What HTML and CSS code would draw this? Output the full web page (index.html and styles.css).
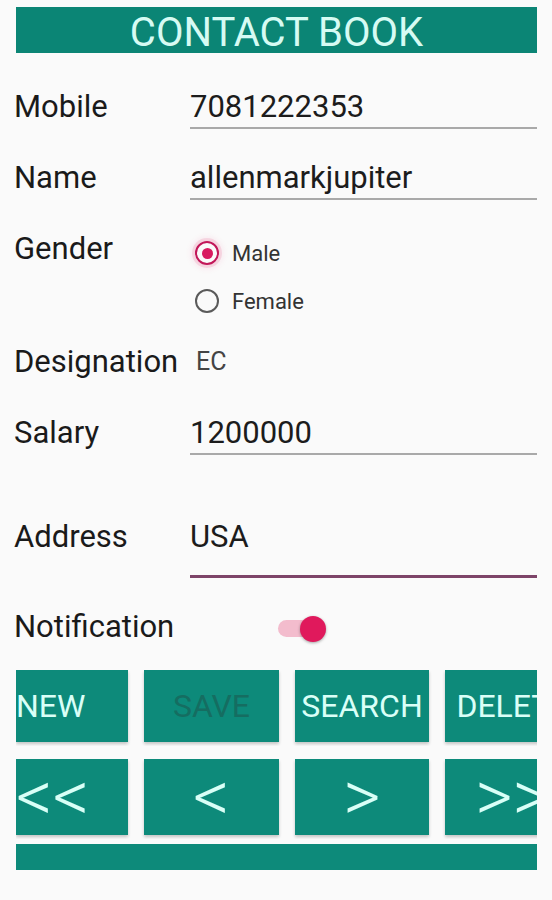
FILE: index.html
```html
<!DOCTYPE html>
<html lang="en">
<head>
    <meta charset="UTF-8">
    <meta name="viewport" content="width=device-width, initial-scale=1.0">
    <title>Contact Book</title>
    <link rel="stylesheet" href="styles.css">
</head>
<body>
    <div class="screen">
        <h1 class="title">CONTACT BOOK</h1>

        <div class="row row-mobile">
            <span class="label">Mobile</span>
            <div class="edit">7081222353</div>
        </div>

        <div class="row row-name">
            <span class="label">Name</span>
            <div class="edit">allenmarkjupiter</div>
        </div>

        <div class="row row-gender">
            <span class="label gender-label">Gender</span>
            <div class="radio-group">
                <div class="radio-item">
                    <span class="radio checked"></span>
                    <span class="radio-text">Male</span>
                </div>
                <div class="radio-item">
                    <span class="radio"></span>
                    <span class="radio-text">Female</span>
                </div>
            </div>
        </div>

        <div class="row row-designation">
            <span class="label">Designation</span>
            <span class="spinner-value">EC</span>
        </div>

        <div class="row row-salary">
            <span class="label">Salary</span>
            <div class="edit">1200000</div>
        </div>

        <div class="row row-address">
            <span class="label">Address</span>
            <div class="edit edit-focused">USA</div>
        </div>

        <div class="row row-notify">
            <span class="label">Notification</span>
            <div class="switch">
                <span class="switch-track"></span>
                <span class="switch-thumb"></span>
            </div>
        </div>

        <div class="btn-row btn-row-top">
            <div class="btn btn-start">NEW</div>
            <div class="btn btn-wide btn-disabled">SAVE</div>
            <div class="btn btn-mid">SEARCH</div>
            <div class="btn btn-wide">DELETE</div>
        </div>

        <div class="btn-row btn-row-nav">
            <div class="btn btn-start arrow">&lt;&lt;</div>
            <div class="btn btn-wide arrow">&lt;</div>
            <div class="btn btn-mid arrow">&gt;</div>
            <div class="btn btn-wide arrow">&gt;&gt;</div>
        </div>

        <div class="bottom-bar"></div>
    </div>
</body>
</html>
```

FILE: styles.css
```css
body {
    margin: 0;
    background: #fafafa;
    font-family: Roboto, 'Liberation Sans', sans-serif;
    color: #1a1a1a;
}
.screen {
    width: 521px;
    padding: 7px 15px 0 16px;
}
.title {
    margin: 0;
    height: 46px;
    box-sizing: border-box;
    padding-top: 6px;
    background: #0b8575;
    color: #d6fbf3;
    font-size: 40px;
    font-weight: 400;
    line-height: 40px;
    text-align: center;
}
.row {
    display: flex;
    align-items: flex-start;
}
.label {
    flex: none;
    width: 176px;
    margin-left: -2px;
    font-size: 31px;
    line-height: 36px;
}
.edit {
    flex: 1;
    font-size: 31px;
    line-height: 36px;
    padding-bottom: 2px;
    border-bottom: 2px solid #a9a9a9;
    color: #1c1c1c;
}
.edit-focused {
    padding-bottom: 20px;
    border-bottom: 3px solid #7d4468;
}
.row-mobile {
    margin-top: 36px;
}
.row-name {
    margin-top: 31px;
}
.row-gender {
    margin-top: 29px;
}
.gender-label {
    margin-top: 2px;
}
.radio-group {
    display: flex;
    flex-direction: column;
}
.radio-item {
    display: flex;
    align-items: center;
    height: 48px;
}
.radio {
    width: 24px;
    height: 24px;
    box-sizing: border-box;
    margin: 0 13px 0 5px;
    border: 2px solid #5a5a5a;
    border-radius: 50%;
    display: flex;
    align-items: center;
    justify-content: center;
}
.radio.checked {
    border: 2.5px solid #c21759;
    box-shadow: 0 0 0 3px rgba(233, 30, 99, 0.12), 0 0 6px 4px rgba(233, 30, 99, 0.08);
}
.radio.checked::after {
    content: "";
    width: 11px;
    height: 11px;
    border-radius: 50%;
    background: #d81b60;
}
.radio-text {
    font-size: 22px;
    color: #333333;
}
.row-designation {
    margin-top: 19px;
}
.spinner-value {
    padding-left: 6px;
    font-size: 25px;
    line-height: 36px;
    color: #444444;
}
.row-salary {
    margin-top: 35px;
}
.row-address {
    margin-top: 64px;
}
.row-notify {
    margin-top: 31px;
}
.switch {
    position: relative;
    margin: 11px 0 0 88px;
    width: 48px;
    height: 17px;
}
.switch-track {
    display: block;
    width: 44px;
    height: 17px;
    border-radius: 9px;
    background: #f3bccd;
}
.switch-thumb {
    position: absolute;
    left: 22px;
    top: -4.5px;
    width: 26px;
    height: 26px;
    border-radius: 50%;
    background: #e0195c;
    box-shadow: 0 1px 3px rgba(0, 0, 0, 0.35);
}
.btn-row {
    display: flex;
    gap: 16px;
    overflow: hidden;
    padding-bottom: 4px;
}
.btn-row-top {
    margin-top: 25px;
}
.btn-row-nav {
    margin-top: 13px;
}
.btn {
    flex: none;
    height: 72px;
    display: flex;
    align-items: center;
    justify-content: center;
    background: #0d8a7a;
    color: #d9fff7;
    font-size: 32px;
    white-space: nowrap;
    box-shadow: 0 2px 3px rgba(0, 0, 0, 0.22);
}
.btn-start {
    width: 112px;
    justify-content: flex-start;
}
.btn-wide {
    width: 135px;
}
.btn-mid {
    width: 134px;
}
.btn-disabled {
    color: #156d61;
}
.btn-row-nav .btn {
    height: 76px;
}
.arrow {
    font-size: 72px;
    font-weight: 300;
    line-height: 72px;
}
.bottom-bar {
    margin-top: 5px;
    height: 26px;
    background: #0d8a7a;
}
```
